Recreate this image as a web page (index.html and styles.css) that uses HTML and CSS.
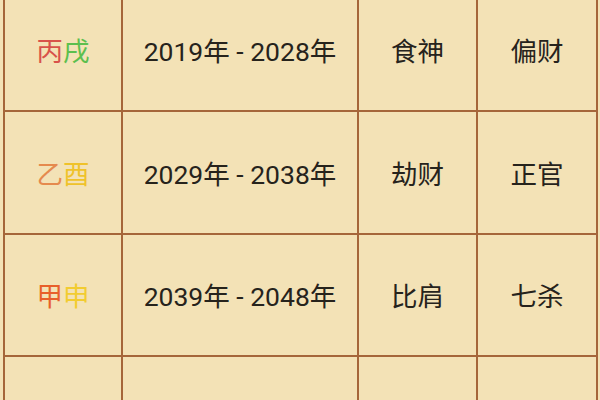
FILE: index.html
```html
<!DOCTYPE html>
<html lang="zh">
<head>
<meta charset="utf-8">
<link rel="stylesheet" href="styles.css">
</head>
<body>
<div class="table">
  <div class="cell"><span class="c-red">丙</span><span class="c-green">戌</span></div>
  <div class="cell">2019年 - 2028年</div>
  <div class="cell">食神</div>
  <div class="cell">偏财</div>

  <div class="cell"><span class="c-orange">乙</span><span class="c-yellow">酉</span></div>
  <div class="cell">2029年 - 2038年</div>
  <div class="cell">劫财</div>
  <div class="cell">正官</div>

  <div class="cell"><span class="c-redorange">甲</span><span class="c-yellow2">申</span></div>
  <div class="cell">2039年 - 2048年</div>
  <div class="cell">比肩</div>
  <div class="cell">七杀</div>

  <div class="cell"></div>
  <div class="cell"></div>
  <div class="cell"></div>
  <div class="cell"></div>
</div>
</body>
</html>
```
FILE: styles.css
```css
html, body {
  margin: 0;
  padding: 0;
  background: #f3e2b6;
  overflow: hidden;
  width: 600px;
  height: 400px;
}
.table {
  display: grid;
  grid-template-columns: 116px 234px 117px 118px;
  grid-auto-rows: 120.5px;
  gap: 2px;
  padding: 2px;
  background: #a5663a;
  width: max-content;
  margin: -12.5px 0 0 3px;
  font-family: Roboto, "Noto Sans CJK SC", sans-serif;
  font-size: 26.5px;
  color: #26231c;
}
.cell {
  background: #f3e2b6;
  display: flex;
  align-items: center;
  justify-content: center;
  white-space: nowrap;
}
.c-red { color: #d8524a; }
.c-green { color: #5cbf4e; }
.c-orange { color: #e58a4e; }
.c-yellow { color: #efc22a; }
.c-redorange { color: #e85f2a; }
.c-yellow2 { color: #f2cc30; }
```
